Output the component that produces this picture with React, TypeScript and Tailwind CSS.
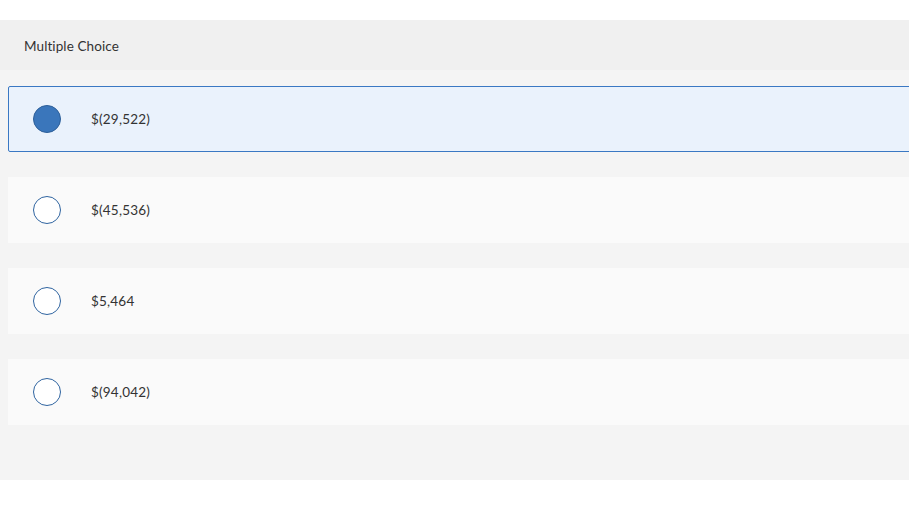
import React from 'react';

const options = ['$(29,522)', '$(45,536)', '$5,464', '$(94,042)'];

export default function App() {
  const selected = 0;
  return (
    <div className="w-[909px] h-[512px] bg-white overflow-hidden pt-5" style={{ fontFamily: 'Lato, "Open Sans", sans-serif' }}>
      <div className="w-[940px]">
        <div className="h-[50px] bg-[#f0f0f0] flex items-center pl-6 text-[13.5px] text-[#333]">
          <span className="mt-0.5 tracking-[0.1px]">Multiple Choice</span>
        </div>
        <div className="bg-[#f4f4f4] pt-4 pb-[55px] pl-2 flex flex-col gap-[25px]">
          {options.map((opt, i) => {
            const on = i === selected;
            return (
              <div
                key={opt}
                className={
                  on
                    ? 'h-[66px] flex items-center bg-[#eaf2fc] border border-[#3a78c3] rounded-[2px] pl-6'
                    : 'h-[66px] flex items-center bg-[#fafafa] pl-[25px]'
                }
              >
                {on ? (
                  <span className="w-[28px] h-[28px] rounded-full bg-[#3a76bb] border border-[#2d5f99]" />
                ) : (
                  <span className="w-[28px] h-[28px] rounded-full bg-white border border-[#2f64a0]" />
                )}
                <span className="ml-[30px] mt-px text-[13.5px] tracking-[0.2px] text-[#333]">{opt}</span>
              </div>
            );
          })}
        </div>
      </div>
    </div>
  );
}
